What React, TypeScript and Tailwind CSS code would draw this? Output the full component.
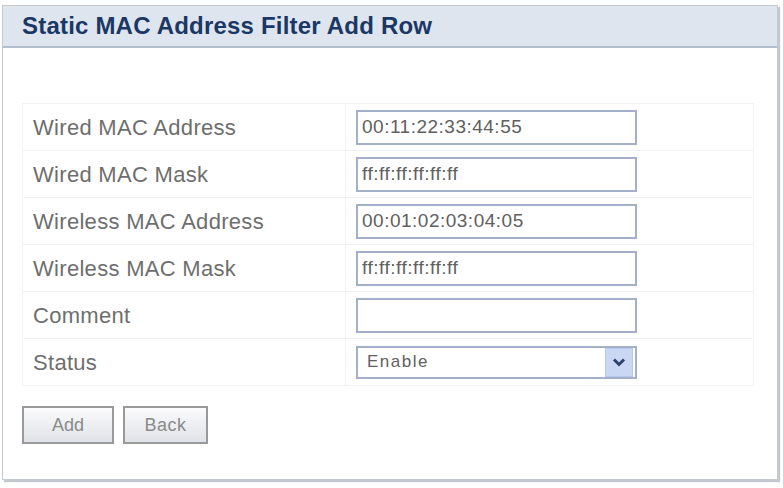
import { useState } from 'react';

// Static MAC filter: one new row of the filter table
const fields = [
	{ label: 'Wired MAC Address', value: '00:11:22:33:44:55' },
	{ label: 'Wired MAC Mask', value: 'ff:ff:ff:ff:ff:ff' },
	{ label: 'Wireless MAC Address', value: '00:01:02:03:04:05' },
	{ label: 'Wireless MAC Mask', value: 'ff:ff:ff:ff:ff:ff' },
	{ label: 'Comment', value: '' }
];

function App(): JSX.Element {
	const [values, setValues] = useState(fields.map((f) => f.value));
	const [status, setStatus] = useState('Enable');

	const changeHandler = (idx: number, val: string) => {
		const next = [...values];
		next[idx] = val;
		setValues(next);
	};

	return (
		<div className="w-[783px] h-[488px] bg-white pt-[5px] pl-[2px] font-['Liberation_Sans',Arial,sans-serif]">
			<div className="w-[776px] h-[475px] flex flex-col border border-[#c5c9d0] shadow-[2px_2px_1px_#c3c7ce]">
				<div className="h-[42px] shrink-0 flex items-center pl-[19px] bg-[#dee5ee] border-b-2 border-[#b3bfcf]">
					<h1 className="text-[24px] font-bold tracking-[0.2px] text-[#1a3766] leading-none">
						Static MAC Address Filter Add Row
					</h1>
				</div>
				<div className="pt-[55px] pl-[19px] pr-[23px]">
					<table className="w-[732px] border-collapse">
						<tbody>
							{fields.map((field, idx) => (
								<tr key={field.label} className="h-[47px]">
									<td className="w-[323px] pl-[10px] border border-[#eff1f4] text-[22px] tracking-[0.3px] text-[#6e6e6e]">
										{field.label}
									</td>
									<td className="pl-[10px] border border-[#eff1f4]">
										<input
											type="text"
											value={values[idx]}
											onChange={(e) => changeHandler(idx, e.target.value)}
											className="block w-[281px] h-[35px] px-[4px] border-2 border-[#a4b0c7] outline-none text-[19px] tracking-[0.5px] text-[#606060]"
										/>
									</td>
								</tr>
							))}
							<tr className="h-[47px]">
								<td className="pl-[10px] border border-[#eff1f4] text-[22px] tracking-[0.3px] text-[#6e6e6e]">
									Status
								</td>
								<td className="pl-[10px] border border-[#eff1f4]">
									<div className="relative w-[281px] h-[33px]">
										<select
											value={status}
											onChange={(e) => setStatus(e.target.value)}
											className="appearance-none block w-full h-full pl-[9px] border-2 border-[#a4b0c7] bg-white outline-none text-[17px] tracking-[1.5px] text-[#606060]">
											<option>Enable</option>
											<option>Disable</option>
										</select>
										<span className="pointer-events-none absolute top-[2px] right-[4px] w-[28px] h-[29px] flex items-center justify-center bg-[#c9d7f5] border border-[#b8c8ec]">
											<svg width="14" height="10" viewBox="0 0 14 10">
												<path
													d="M2 2.5 L7 7.5 L12 2.5"
													fill="none"
													stroke="#2c4270"
													strokeWidth="3"
												/>
											</svg>
										</span>
									</div>
								</td>
							</tr>
						</tbody>
					</table>
					<div className="mt-[20px] flex gap-[9px]">
						<button className="w-[92px] h-[38px] border-2 border-[#999] bg-gradient-to-b from-[#fbfbfc] to-[#dfe2e7] text-[18px] text-[#8a8a8a]">
							Add
						</button>
						<button className="w-[85px] h-[38px] border-2 border-[#999] bg-gradient-to-b from-[#fbfbfc] to-[#dfe2e7] text-[18px] tracking-[0.5px] text-[#8a8a8a]">
							Back
						</button>
					</div>
				</div>
			</div>
		</div>
	);
}

export default App;
